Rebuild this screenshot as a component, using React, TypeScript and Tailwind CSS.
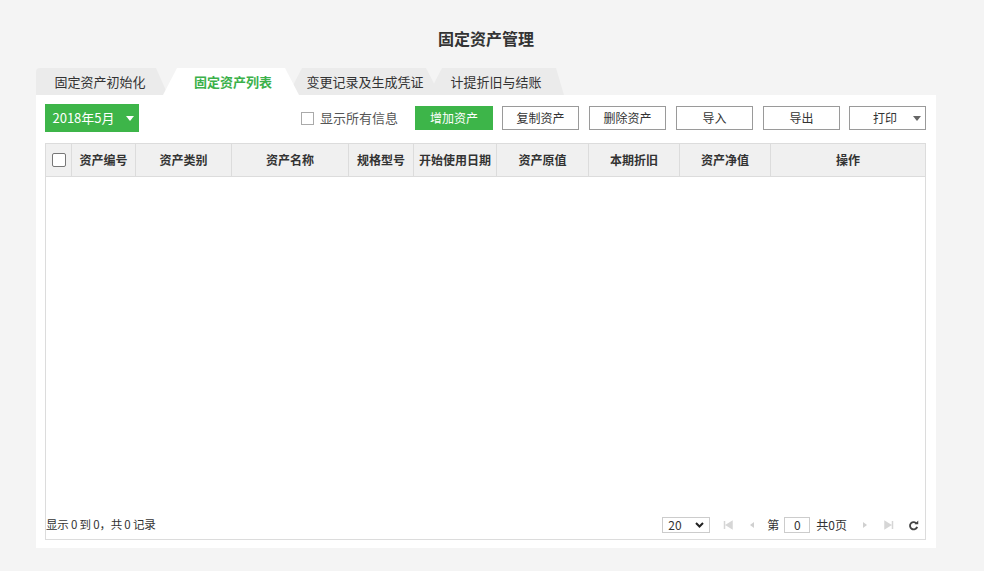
import React from "react";

const font = { fontFamily: '"Noto Sans CJK SC", "Liberation Sans", sans-serif' };

function Tab({ label, active, className }: { label: string; active?: boolean; className: string }) {
  return (
    <div
      className={
        "flex h-[27px] items-center justify-center text-[13px] " +
        (active ? "bg-white text-[#3bb14a] font-semibold z-20" : "bg-[#ebebeb] text-[#333]") +
        " " +
        className
      }
    >
      {label}
    </div>
  );
}

function Btn({ children, className = "" }: { children: React.ReactNode; className?: string }) {
  return (
    <button className={"h-[24px] w-[77px] border border-[#9a9a9a] bg-white text-[12px] text-[#333] " + className}>
      {children}
    </button>
  );
}

const cols: [string, number][] = [
  ["资产编号", 64],
  ["资产类别", 96],
  ["资产名称", 117],
  ["规格型号", 65],
  ["开始使用日期", 83],
  ["资产原值", 92],
  ["本期折旧", 91],
  ["资产净值", 91],
];

function Caret() {
  return (
    <svg width="8" height="5" viewBox="0 0 8 5">
      <path d="M0 0h8L4 5z" fill="currentColor" />
    </svg>
  );
}

export default function App() {
  return (
    <div className="min-h-[571px] w-[984px] bg-[#f4f4f4]" style={font}>
      <div className="ml-[36px] w-[900px] pt-[28px]">
        <div className="h-[21px] text-center text-[16px] font-bold leading-[21px] text-[#333]">固定资产管理</div>
        <div className="mt-[19px] flex h-[27px]">
          <Tab
            label="固定资产初始化"
            className="relative z-0 w-[132px] rounded-tl-[4px] pr-[4px] [clip-path:polygon(0_0,calc(100%-12px)_0,100%_100%,0_100%)]"
          />
          <Tab
            label="固定资产列表"
            active
            className="relative ml-[-5px] w-[136px] pl-[4px] [clip-path:polygon(14px_0,calc(100%-14px)_0,100%_100%,0_100%)]"
          />
          <Tab
            label="变更记录及生成凭证"
            className="relative z-0 ml-[-11px] w-[152px] pl-[2px] [clip-path:polygon(14px_0,calc(100%-14px)_0,100%_100%,0_100%)]"
          />
          <Tab
            label="计提折旧与结账"
            className="relative z-10 ml-[-12px] w-[136px] [clip-path:polygon(14px_0,calc(100%-8px)_0,100%_100%,0_100%)]"
          />
        </div>
        <div className="bg-white px-[9px] pb-[8px] pt-[9px] pr-[10px]">
          <div className="flex h-[28px] items-center">
            <button className="flex h-[28px] w-[94px] items-center justify-center gap-[11px] bg-[#3db549] pl-[2px] text-[13px] text-white">
              <span>2018年5月</span>
              <span className="text-white">
                <Caret />
              </span>
            </button>
            <div className="ml-auto flex items-center">
              <span className="h-[13px] w-[13px] border border-[#aaa] bg-white" />
              <span className="ml-[6px] text-[13px] text-[#555]">显示所有信息</span>
              <button className="ml-[17px] h-[24px] w-[78px] bg-[#3db549] text-[12px] text-white">增加资产</button>
              <Btn className="ml-[9px]">复制资产</Btn>
              <Btn className="ml-[10px]">删除资产</Btn>
              <Btn className="ml-[10px]">导入</Btn>
              <Btn className="ml-[10px]">导出</Btn>
              <button className="ml-[9px] flex h-[24px] w-[77px] items-center justify-end gap-[16px] border border-[#9a9a9a] bg-white pr-[4px] text-[12px] text-[#333]">
                <span>打印</span>
                <span className="text-[#666]">
                  <Caret />
                </span>
              </button>
            </div>
          </div>
          <div className="mt-[11px] flex h-[397px] flex-col border border-[#dcdcdc]">
            <div className="flex h-[33px] border-b border-[#dcdcdc] bg-[#f0f0f0] text-[12px] font-semibold text-[#333]">
              <div className="flex w-[26px] items-center justify-center border-r border-[#dcdcdc]">
                <span className="h-[14px] w-[14px] rounded-[2px] border border-[#777] bg-white" />
              </div>
              {cols.map(([c, w]) => (
                <div
                  key={c}
                  className="flex items-center justify-center border-r border-[#dcdcdc]"
                  style={{ width: w }}
                >
                  {c}
                </div>
              ))}
              <div className="flex flex-1 items-center justify-center">操作</div>
            </div>
            <div className="flex-1" />
            <div className="flex h-[28px] items-center text-[12px] text-[#333]">
              <span className="text-[11.5px] tracking-[-0.2px]">显示 0 到 0，共 0 记录</span>
              <div className="ml-auto flex items-center pr-[6px]">
                <div className="flex h-[16px] w-[48px] items-center justify-between border border-[#ccc] px-[5px] text-[12px]">
                  <span>20</span>
                  <svg width="9" height="6" viewBox="0 0 9 6">
                    <path d="M1 1l3.5 3.5L8 1" stroke="#222" strokeWidth="2" fill="none" />
                  </svg>
                </div>
                <svg className="ml-[13px]" width="10" height="10" viewBox="0 0 10 10">
                  <path d="M1.5 1v8M9 1.5v7L3.5 5z" stroke="#d6d6d6" strokeWidth="1.5" fill="#d6d6d6" />
                </svg>
                <svg className="ml-[15px]" width="8" height="10" viewBox="0 0 8 10">
                  <path d="M6 2v6L2 5z" fill="#d0d0d0" />
                </svg>
                <span className="ml-[11px]">第</span>
                <div className="ml-[5px] flex h-[16px] w-[26px] items-center justify-center border border-[#ccc]">0</div>
                <span className="ml-[6px]">共0页</span>
                <svg className="ml-[14px]" width="8" height="10" viewBox="0 0 8 10">
                  <path d="M2 2v6L6 5z" fill="#d0d0d0" />
                </svg>
                <svg className="ml-[15px]" width="10" height="10" viewBox="0 0 10 10">
                  <path d="M8.5 1v8M1 1.5v7L6.5 5z" stroke="#d6d6d6" strokeWidth="1.5" fill="#d6d6d6" />
                </svg>
                <svg className="ml-[14px]" width="11" height="11" viewBox="0 0 12 12">
                  <path d="M9.6 4.2A4 4 0 1 0 10 7.5" stroke="#444" strokeWidth="2" fill="none" />
                  <path d="M7.2 4.6h4V0.6z" fill="#444" />
                </svg>
              </div>
            </div>
          </div>
        </div>
      </div>
    </div>
  );
}
